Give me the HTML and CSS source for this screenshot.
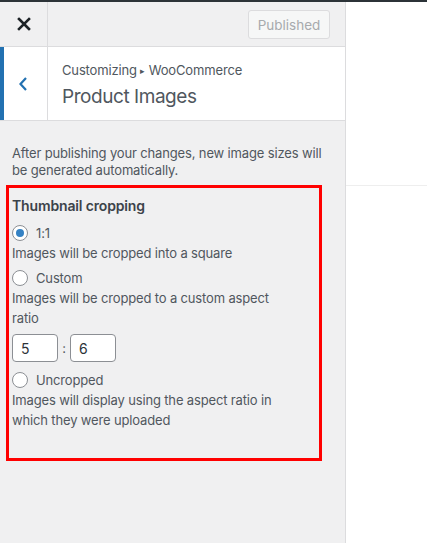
FILE: index.html
```html
<!DOCTYPE html>
<html>
<head>
<meta charset="utf-8">
<link rel="stylesheet" href="styles.css">
</head>
<body>
<div class="topline"></div>
<div class="layout">
  <aside class="sidebar">
    <header class="header">
      <button class="close" aria-label="Close">
        <svg width="14" height="14" viewBox="0 0 14 14"><path d="M2 2 L12 12 M12 2 L2 12" stroke="#1d2327" stroke-width="2.6" stroke-linecap="square"/></svg>
      </button>
      <div class="header-actions">
        <button class="published">Published</button>
      </div>
    </header>
    <div class="section-title">
      <button class="back" aria-label="Back">
        <svg width="10" height="16" viewBox="0 0 10 16"><path d="M8 2 L2.5 8 L8 14" fill="none" stroke="#2271b1" stroke-width="2.2"/></svg>
      </button>
      <div class="title-text">
        <div class="crumb">Customizing <span class="sep">▸</span> WooCommerce</div>
        <h2 class="title">Product Images</h2>
      </div>
    </div>
    <div class="content">
      <p class="notice">After publishing your changes, new image sizes will be generated automatically.</p>
      <div class="control">
        <div class="control-title">Thumbnail cropping</div>
        <label class="option"><span class="radio checked"></span>1:1</label>
        <div class="desc">Images will be cropped into a square</div>
        <label class="option"><span class="radio"></span>Custom</label>
        <div class="desc">Images will be cropped to a custom aspect ratio</div>
        <div class="ratio">
          <input class="num" type="text" value="5">
          <span class="colon">:</span>
          <input class="num" type="text" value="6">
        </div>
        <label class="option"><span class="radio"></span>Uncropped</label>
        <div class="desc">Images will display using the aspect ratio in which they were uploaded</div>
      </div>
    </div>
  </aside>
  <main class="preview">
    <div class="preview-line"></div>
  </main>
</div>
</body>
</html>
```
FILE: styles.css
```css
* { box-sizing: border-box; }
html, body { margin: 0; padding: 0; height: 100%; }
body {
  font-family: Inter, "Open Sans", "Liberation Sans", sans-serif;
  font-size: 13px;
  letter-spacing: -0.15px;
  color: #50575e;
  background: #fff;
  display: flex;
  flex-direction: column;
  overflow: hidden;
}
.topline { height: 2px; background: #2c3338; flex: none; }
.layout { display: flex; flex: 1; }
.sidebar {
  width: 346px;
  background: #f0f0f1;
  border-right: 1px solid #dcdcde;
  display: flex;
  flex-direction: column;
}
.header {
  height: 45px;
  display: flex;
  border-bottom: 1px solid #dcdcde;
}
.close {
  width: 48px;
  border: 0;
  border-right: 1px solid #dcdcde;
  background: #f0f0f1;
  display: flex;
  align-items: center;
  justify-content: center;
  padding: 0;
}
.header-actions {
  flex: 1;
  display: flex;
  justify-content: flex-end;
  align-items: flex-start;
  padding: 8px 15px 0 0;
}
.published {
  height: 29px;
  width: 82px;
  border: 1px solid #dcdcde;
  background: #f6f7f7;
  color: #a7aaad;
  border-radius: 3px;
  font-family: inherit;
  font-size: 13.5px;
  letter-spacing: 0;
  padding: 0;
}
.section-title {
  height: 74px;
  background: #fff;
  display: flex;
  border-bottom: 1px solid #dcdcde;
}
.back {
  width: 48px;
  border: 0;
  border-left: 4px solid #2271b1;
  border-right: 1px solid #dcdcde;
  background: #fff;
  display: flex;
  align-items: center;
  justify-content: center;
  padding: 0 5px 0 0;
}
.title-text { padding: 15px 0 0 14px; }
.crumb { font-size: 13px; color: #50575e; line-height: 16px; }
.sep { font-size: 9px; position: relative; top: -1px; }
.title {
  margin: 4px 0 0;
  font-size: 19px;
  letter-spacing: -0.45px;
  font-weight: 400;
  color: #50575e;
  line-height: 26px;
}
.content { padding: 24px 12px 12px; }
.notice { margin: 0 0 18px; line-height: 17px; }
.control { position: relative; }
.control::after {
  content: "";
  position: absolute;
  left: -6px; right: 11px; top: -12px; bottom: -31px;
  border: 3px solid #ff0000;
  pointer-events: none;
}
.control-title {
  font-size: 14px;
  font-weight: 600;
  color: #3c434a;
  line-height: 18px;
  margin: 0 0 9px;
}
.option {
  display: flex;
  align-items: center;
  gap: 8px;
  height: 18px;
  color: #50575e;
}
.radio {
  width: 16px; height: 16px;
  border-radius: 50%;
  border: 1px solid #8c8f94;
  background: #fff;
  display: inline-flex;
  align-items: center;
  justify-content: center;
}
.radio.checked::before {
  content: "";
  width: 8px; height: 8px;
  border-radius: 50%;
  background: #3582c4;
}
.desc { line-height: 20px; margin: 1px 0 6px; padding-right: 40px; }
.ratio { display: flex; align-items: center; gap: 0; margin: 6px 0 9px; }
.num {
  width: 46px; height: 28px;
  border: 1px solid #8c8f94;
  border-radius: 4px;
  background: #fff;
  font-family: inherit;
  font-size: 14px;
  color: #2c3338;
  padding: 0 8px;
}
.colon { width: 12px; text-align: center; color: #50575e; }
.preview { flex: 1; background: #fff; }
.preview-line { height: 1px; background: #eee; margin-top: 183px; }
```
